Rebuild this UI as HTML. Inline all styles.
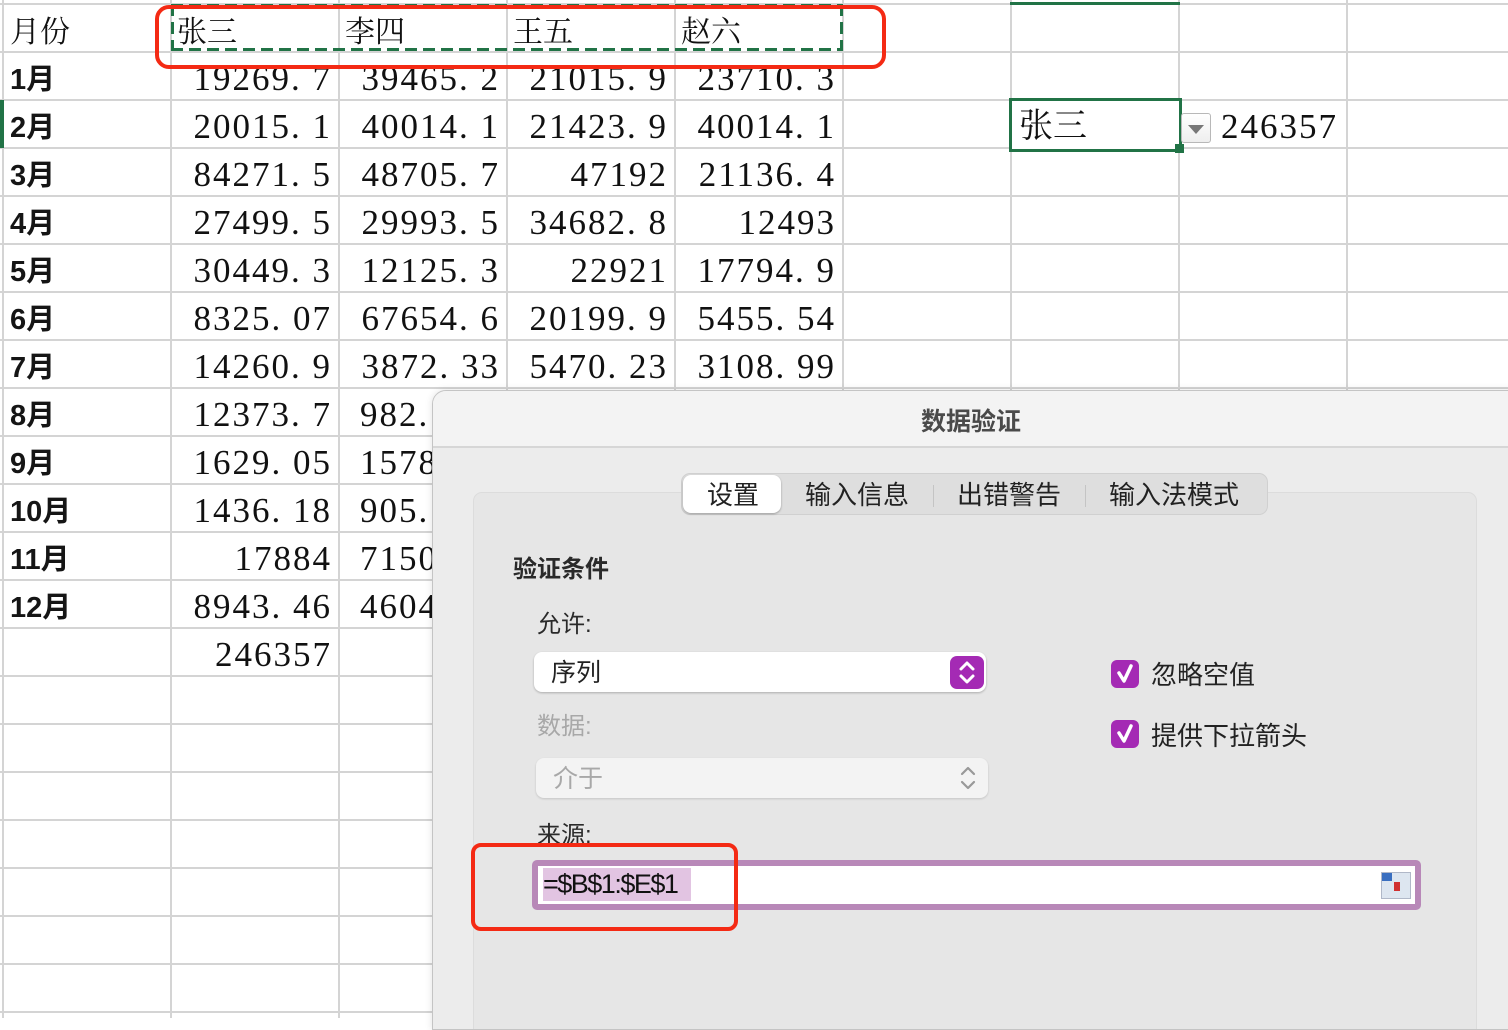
<!DOCTYPE html>
<html><head><meta charset="utf-8"><style>
*{margin:0;padding:0;box-sizing:border-box}
body{width:1508px;height:1018px;overflow:hidden;background:#fff;position:relative;font-family:"Liberation Sans","Noto Sans CJK SC",sans-serif}
.hl{position:absolute;left:0;width:1508px;height:2px;background:#d4d4d4}
.vl{position:absolute;top:0;width:2px;height:1018px;background:#d4d4d4}
.n{position:absolute;width:168px;text-align:right;padding-right:7px;font-family:"Liberation Serif","Noto Serif CJK SC",serif;font-size:35px;letter-spacing:2px;color:#111;line-height:48px;white-space:pre}
.m{position:absolute;left:10px;font-size:29px;font-weight:bold;color:#151515;line-height:48px}
.h{position:absolute;font-family:"Liberation Serif","Noto Serif CJK SC",serif;font-size:30px;color:#111;line-height:48px}
.a{position:absolute}
</style></head><body>
<div class="hl" style="top:3px"></div>
<div class="hl" style="top:51px"></div><div class="hl" style="top:99px"></div><div class="hl" style="top:147px"></div><div class="hl" style="top:195px"></div><div class="hl" style="top:243px"></div><div class="hl" style="top:291px"></div><div class="hl" style="top:339px"></div><div class="hl" style="top:387px"></div><div class="hl" style="top:435px"></div><div class="hl" style="top:483px"></div><div class="hl" style="top:531px"></div><div class="hl" style="top:579px"></div><div class="hl" style="top:627px"></div><div class="hl" style="top:675px"></div><div class="hl" style="top:723px"></div><div class="hl" style="top:771px"></div><div class="hl" style="top:819px"></div><div class="hl" style="top:867px"></div><div class="hl" style="top:915px"></div><div class="hl" style="top:963px"></div><div class="hl" style="top:1011px"></div>
<div class="vl" style="left:2px"></div><div class="vl" style="left:170px"></div><div class="vl" style="left:338px"></div><div class="vl" style="left:506px"></div><div class="vl" style="left:674px"></div><div class="vl" style="left:842px"></div><div class="vl" style="left:1010px"></div><div class="vl" style="left:1178px"></div><div class="vl" style="left:1346px"></div>
<div class="a" style="left:0;top:100px;width:4px;height:48px;background:#217346"></div>
<div class="a" style="left:1010px;top:2px;width:170px;height:3px;background:#217346"></div>

<div class="h" style="left:10px;top:9px">月份</div>
<div class="h" style="left:177px;top:9px">张三</div>
<div class="h" style="left:345px;top:9px">李四</div>
<div class="h" style="left:513px;top:9px">王五</div>
<div class="h" style="left:681px;top:9px">赵六</div>
<div class="a" style="left:171px;top:4px;width:672px;height:3px;background:repeating-linear-gradient(90deg,#217346 0 12px,transparent 12px 18px)"></div>
<div class="a" style="left:171px;top:48px;width:672px;height:3px;background:repeating-linear-gradient(90deg,#217346 0 12px,transparent 12px 18px)"></div>
<div class="a" style="left:171px;top:4px;width:3px;height:47px;background:repeating-linear-gradient(180deg,#217346 0 12px,transparent 12px 18px)"></div>
<div class="a" style="left:840px;top:4px;width:3px;height:47px;background:repeating-linear-gradient(180deg,#217346 0 12px,transparent 12px 18px)"></div>

<div class="m" style="top:56px">1月</div><div class="m" style="top:104px">2月</div><div class="m" style="top:152px">3月</div><div class="m" style="top:200px">4月</div><div class="m" style="top:248px">5月</div><div class="m" style="top:296px">6月</div><div class="m" style="top:344px">7月</div><div class="m" style="top:392px">8月</div><div class="m" style="top:440px">9月</div><div class="m" style="top:488px">10月</div><div class="m" style="top:536px">11月</div><div class="m" style="top:584px">12月</div>

<div class="n" style="left:171px;top:55px">19269. 7</div><div class="n" style="left:339px;top:55px">39465. 2</div><div class="n" style="left:507px;top:55px">21015. 9</div><div class="n" style="left:675px;top:55px">23710. 3</div>
<div class="n" style="left:171px;top:103px">20015. 1</div><div class="n" style="left:339px;top:103px">40014. 1</div><div class="n" style="left:507px;top:103px">21423. 9</div><div class="n" style="left:675px;top:103px">40014. 1</div>
<div class="n" style="left:171px;top:151px">84271. 5</div><div class="n" style="left:339px;top:151px">48705. 7</div><div class="n" style="left:507px;top:151px">47192</div><div class="n" style="left:675px;top:151px">21136. 4</div>
<div class="n" style="left:171px;top:199px">27499. 5</div><div class="n" style="left:339px;top:199px">29993. 5</div><div class="n" style="left:507px;top:199px">34682. 8</div><div class="n" style="left:675px;top:199px">12493</div>
<div class="n" style="left:171px;top:247px">30449. 3</div><div class="n" style="left:339px;top:247px">12125. 3</div><div class="n" style="left:507px;top:247px">22921</div><div class="n" style="left:675px;top:247px">17794. 9</div>
<div class="n" style="left:171px;top:295px">8325. 07</div><div class="n" style="left:339px;top:295px">67654. 6</div><div class="n" style="left:507px;top:295px">20199. 9</div><div class="n" style="left:675px;top:295px">5455. 54</div>
<div class="n" style="left:171px;top:343px">14260. 9</div><div class="n" style="left:339px;top:343px">3872. 33</div><div class="n" style="left:507px;top:343px">5470. 23</div><div class="n" style="left:675px;top:343px">3108. 99</div>
<div class="n" style="left:171px;top:391px">12373. 7</div><div class="n" style="left:339px;top:391px;text-align:left;padding-left:21px">982. 55</div>
<div class="n" style="left:171px;top:439px">1629. 05</div><div class="n" style="left:339px;top:439px;text-align:left;padding-left:21px">1578. 2</div>
<div class="n" style="left:171px;top:487px">1436. 18</div><div class="n" style="left:339px;top:487px;text-align:left;padding-left:21px">905. 21</div>
<div class="n" style="left:171px;top:535px">17884</div><div class="n" style="left:339px;top:535px;text-align:left;padding-left:21px">7150. 2</div>
<div class="n" style="left:171px;top:583px">8943. 46</div><div class="n" style="left:339px;top:583px;text-align:left;padding-left:21px">4604. 5</div>
<div class="n" style="left:171px;top:631px">246357</div>

<div class="a" style="left:1009px;top:98px;width:173px;height:54px;border:3px solid #217346;background:#fff"></div>
<div class="a" style="left:1175px;top:144px;width:9px;height:9px;background:#217346"></div>
<div class="h" style="left:1019px;top:103px;font-size:34px">张三</div>
<div class="a" style="left:1181px;top:113px;width:30px;height:30px;border:1px solid #b8b8b8;border-radius:3px;background:linear-gradient(#fff,#eee)"></div>
<div class="a" style="left:1188px;top:125px;width:0;height:0;border-left:8px solid transparent;border-right:8px solid transparent;border-top:9px solid #777"></div>
<div class="n" style="left:1179px;top:103px;text-align:left;padding-left:42px;width:180px">246357</div>

<div class="a" style="left:155px;top:5px;width:731px;height:64px;border:4px solid #f42a14;border-radius:14px"></div>

<div class="a" style="left:432px;top:390px;width:1090px;height:640px;background:#ececec;border:1px solid #c4c4c4;border-radius:14px 0 0 0;box-shadow:0 0 8px rgba(0,0,0,.12);overflow:hidden">
  <div class="a" style="left:0;top:0;width:1090px;height:57px;background:#f3f3f3;border-bottom:2px solid #d6d6d6"></div>
  <div class="a" style="left:488px;top:11px;font-size:25px;font-weight:bold;color:#4a4a4a">数据验证</div>
  <div class="a" style="left:40px;top:101px;width:1004px;height:560px;background:#e6e6e6;border:1px solid #dcdcdc;border-radius:9px"></div>
  <div class="a" style="left:248px;top:82px;width:587px;height:42px;background:#dedede;border-radius:9px;border:1px solid #d0d0d0"></div>
  <div class="a" style="left:250px;top:84px;width:98px;height:38px;background:#fff;border-radius:8px;box-shadow:0 1px 2px rgba(0,0,0,.3)"></div>
  <div class="a" style="left:274px;top:84px;font-size:26px;color:#222">设置</div>
  <div class="a" style="left:372px;top:84px;font-size:26px;color:#222">输入信息</div>
  <div class="a" style="left:500px;top:94px;width:1px;height:22px;background:#c4c4c4"></div>
  <div class="a" style="left:524px;top:84px;font-size:26px;color:#222">出错警告</div>
  <div class="a" style="left:652px;top:94px;width:1px;height:22px;background:#c4c4c4"></div>
  <div class="a" style="left:676px;top:84px;font-size:26px;color:#222">输入法模式</div>

  <div class="a" style="left:80px;top:158px;font-size:24px;font-weight:bold;color:#2a2a2a">验证条件</div>
  <div class="a" style="left:104px;top:213px;font-size:24px;color:#2a2a2a">允许:</div>
  <div class="a" style="left:101px;top:261px;width:452px;height:40px;background:#fff;border-radius:8px;box-shadow:0 1px 2px rgba(0,0,0,.25)"></div>
  <div class="a" style="left:118px;top:262px;font-size:25px;color:#222">序列</div>
  <svg class="a" style="left:517px;top:265px" width="34" height="33"><rect width="34" height="33" rx="7" fill="#a42ab4"/><path d="M11 13 L17 7 L23 13 M11 20 L17 26 L23 20" stroke="#fff" stroke-width="3" fill="none" stroke-linecap="round" stroke-linejoin="round"/></svg>
  <div class="a" style="left:104px;top:315px;font-size:24px;color:#a8a8a8">数据:</div>
  <div class="a" style="left:103px;top:367px;width:452px;height:40px;background:#f3f3f3;border-radius:8px;box-shadow:0 1px 2px rgba(0,0,0,.15)"></div>
  <div class="a" style="left:120px;top:368px;font-size:25px;color:#a8a8a8">介于</div>
  <svg class="a" style="left:524px;top:372px" width="22" height="30"><path d="M5 11 L11 5 L17 11 M5 19 L11 25 L17 19" stroke="#999" stroke-width="2.2" fill="none" stroke-linecap="round" stroke-linejoin="round"/></svg>
  <div class="a" style="left:104px;top:424px;font-size:24px;color:#2a2a2a">来源:</div>
  <div class="a" style="left:99px;top:469px;width:889px;height:50px;background:#fff;border:6px solid #b888b8;border-radius:5px"></div>
  <div class="a" style="left:110px;top:477px;width:148px;height:33px;background:#e2c4e2"></div>
  <div class="a" style="left:110px;top:477px;font-size:27px;color:#111;line-height:33px;letter-spacing:-1.5px">=$B$1:$E$1</div>
  <div class="a" style="left:948px;top:481px;width:30px;height:27px;background:#dde6f0;border:1px solid #b0b8c8"><div style="position:absolute;left:0;top:0;width:10px;height:8px;background:#3a6fc0"></div><div style="position:absolute;left:12px;top:9px;width:6px;height:9px;background:#d03030"></div></div>

  <svg class="a" style="left:678px;top:269px" width="28" height="28"><rect width="28" height="28" rx="6" fill="#a42ab4"/><path d="M8 13 L13 21 L20 6" stroke="#fff" stroke-width="3.5" fill="none" stroke-linecap="round" stroke-linejoin="round"/></svg>
  <div class="a" style="left:718px;top:264px;font-size:26px;color:#222">忽略空值</div>
  <svg class="a" style="left:678px;top:329px" width="28" height="28"><rect width="28" height="28" rx="6" fill="#a42ab4"/><path d="M8 13 L13 21 L20 6" stroke="#fff" stroke-width="3.5" fill="none" stroke-linecap="round" stroke-linejoin="round"/></svg>
  <div class="a" style="left:718px;top:325px;font-size:26px;color:#222">提供下拉箭头</div>
</div>
<div class="a" style="left:471px;top:843px;width:267px;height:88px;border:4px solid #f42a14;border-radius:10px"></div>
</body></html>
